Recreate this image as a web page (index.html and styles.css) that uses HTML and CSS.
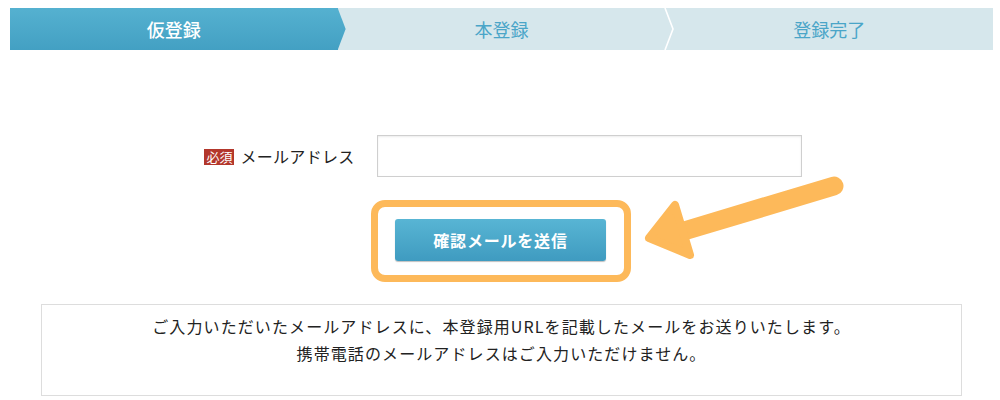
FILE: index.html
```html
<!DOCTYPE html>
<html lang="ja">
<head>
    <meta charset="UTF-8">
    <meta name="viewport" content="width=device-width, initial-scale=1.0">
    <title>仮登録</title>
    <link rel="stylesheet" href="styles.css">
</head>
<body>
    <div class="page">
        <!-- ステップ表示 -->
        <ol class="steps">
            <li class="step step-current">仮登録</li>
            <li class="step step-mid">本登録
                <svg class="step-sep" width="10" height="42" viewBox="0 0 10 42">
                    <polyline points="1,0 9,21 1,42" fill="none" stroke="#fff" stroke-width="1.6"/>
                </svg>
            </li>
            <li class="step">登録完了</li>
        </ol>

        <!-- メールアドレス入力 -->
        <form class="entry" onsubmit="return false">
            <div class="entry-row">
                <label class="entry-label" for="mail"><span class="badge">必須</span>メールアドレス</label>
                <input class="entry-input" id="mail" type="email">
            </div>
            <div class="entry-submit">
                <div class="highlight">
                    <button class="send-btn" type="submit">確認メールを送信</button>
                </div>
            </div>
        </form>

        <div class="notice">
            <p>ご入力いただいたメールアドレスに、本登録用URLを記載したメールをお送りいたします。</p>
            <p>携帯電話のメールアドレスはご入力いただけません。</p>
        </div>

        <!-- 注釈の矢印 -->
        <svg class="pointer" width="1000" height="400" viewBox="0 0 1000 400">
            <line x1="834" y1="186" x2="684" y2="231" stroke="#fdb95a" stroke-width="19" stroke-linecap="round"/>
            <polygon points="649,238 675,205 690,255" fill="#fdb95a" stroke="#fdb95a" stroke-width="8" stroke-linejoin="round"/>
        </svg>
    </div>
</body>
</html>
```

FILE: styles.css
```css
body {
    margin: 0;
    background: #fff;
    color: #222;
    font-family: "Noto Sans CJK JP", "Noto Sans", sans-serif;
}

.page {
    position: relative;
    width: 1000px;
    height: 400px;
    overflow: hidden;
}

.steps {
    display: grid;
    grid-template-columns: repeat(3, 1fr);
    list-style: none;
    margin: 8px 7px 0 10px;
    padding: 0;
    height: 42px;
    background: #d6e7ec;
}

.step {
    position: relative;
    display: flex;
    align-items: center;
    justify-content: center;
    font-size: 18px;
    color: #4aa5c8;
}

.step-current {
    color: #fff;
    font-weight: 500;
    background: linear-gradient(#55b1d0, #43a0c3);
}

.step-current::after {
    content: "";
    position: absolute;
    top: 0;
    right: -8px;
    width: 8px;
    height: 100%;
    background: linear-gradient(#55b1d0, #43a0c3);
    clip-path: polygon(0 0, 100% 50%, 0 100%);
}

.step-sep {
    position: absolute;
    top: 0;
    right: -9px;
}

.entry-row {
    display: flex;
    justify-content: center;
    align-items: center;
    gap: 22px;
    margin-top: 85px;
    padding-left: 6px;
}

.entry-label {
    display: flex;
    align-items: center;
    font-size: 16px;
    letter-spacing: 0.3px;
}

.badge {
    background: #b3372c;
    color: #fff;
    font-size: 13px;
    line-height: 16px;
    padding: 0 2px;
    margin-right: 6px;
    margin-top: 2px;
    letter-spacing: 0;
}

.entry-input {
    box-sizing: border-box;
    width: 425px;
    height: 42px;
    border: 1px solid #cfcfcf;
    box-shadow: inset 0 1px 2px rgba(0, 0, 0, 0.08);
    margin: 0;
}

.entry-submit {
    display: flex;
    justify-content: center;
    margin-top: 23px;
    padding-left: 2px;
}

.highlight {
    border: 7px solid #fdb95a;
    border-radius: 14px;
    padding: 12px 18px 14px 17px;
}

.send-btn {
    display: block;
    width: 211px;
    height: 42px;
    border: none;
    border-radius: 3px;
    background: linear-gradient(#58b5d4, #3f9bc0);
    box-shadow: 0 1px 1px rgba(0, 0, 0, 0.25);
    color: #fff;
    font-family: inherit;
    font-size: 16px;
    font-weight: bold;
    letter-spacing: 0.8px;
}

.notice {
    margin: 22px 38px 0 41px;
    border: 1px solid #ddd;
    padding: 8px 0 28px;
    text-align: center;
    font-size: 16px;
    letter-spacing: 1.1px;
    line-height: 27px;
}

.notice p {
    margin: 0;
}

.pointer {
    position: absolute;
    top: 0;
    left: 0;
    pointer-events: none;
}
```
